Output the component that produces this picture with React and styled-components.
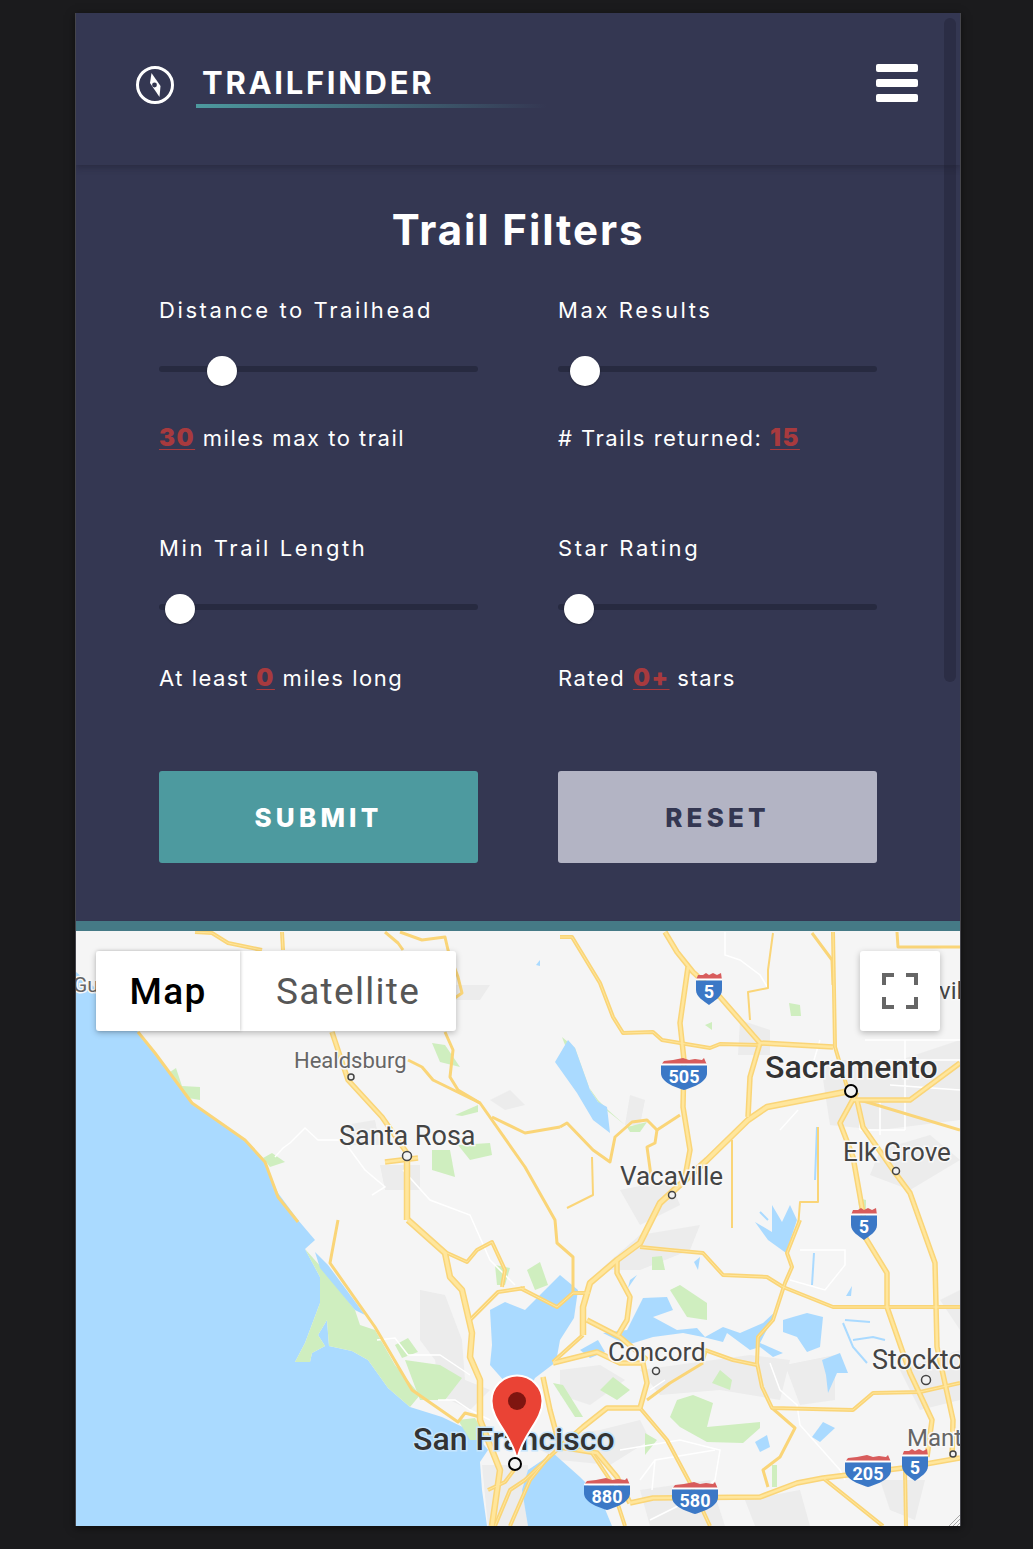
import React from "react"
import styled, { createGlobalStyle } from "styled-components"

const Global = createGlobalStyle`
  html, body { margin: 0; padding: 0; background: #1b1b1d; }
  body { font-family: "Inter", "Liberation Sans", sans-serif; }
  * { box-sizing: border-box; }
`

const Page = styled.div`
  width: 1033px;
  height: 1549px;
  padding: 13px 72px 23px 75px;
`
const Panel = styled.main`
  position: relative;
  height: 1513px;
  display: flex;
  flex-direction: column;
  background: #343752;
  border-left: 1px solid #45454b;
  border-right: 1px solid #45454b;
  box-shadow: 0 2px 8px rgba(0, 0, 0, 0.5);
  overflow: hidden;
`
const Scrollbar = styled.div`
  position: absolute;
  top: 5px;
  right: 4px;
  width: 12px;
  height: 664px;
  border-radius: 6px;
  background: #2b2d45;
`
const Header = styled.header`
  position: relative;
  z-index: 1;
  flex: 0 0 152px;
  display: flex;
  align-items: flex-start;
  padding: 50px 42px 0 59px;
  box-shadow: 0 3px 6px rgba(30, 31, 48, 0.45);
`
const Brand = styled.div`
  display: flex;
  align-items: flex-start;
  flex: 1;
`
const LogoWrap = styled.div`
  width: 40px;
  height: 40px;
  margin-top: 2px;
  margin-right: 21px;
`
const Wordmark = styled.h1`
  margin: 0;
  width: 350px;
  padding: 0 0 1px 6px;
  font-size: 31px;
  line-height: 40px;
  font-weight: 700;
  letter-spacing: 2.7px;
  color: #fff;
  border-bottom: 4px solid transparent;
  border-image: linear-gradient(90deg, #4d9a9f 0%, #343752 100%) 1;
`
const Burger = styled.button`
  display: flex;
  flex-direction: column;
  justify-content: space-between;
  width: 42px;
  height: 38px;
  margin-top: 1px;
  padding: 0;
  background: none;
  border: 0;
  span {
    display: block;
    height: 8px;
    border-radius: 2px;
    background: #fff;
  }
`
const Filters = styled.section`
  flex: 0 0 756px;
  padding: 37px 83px 0 83px;
`
const Title = styled.h2`
  margin: 0 0 38px;
  text-align: center;
  font-size: 42px;
  line-height: 56px;
  font-weight: 700;
  letter-spacing: 1.9px;
  color: #fff;
`
const Grid = styled.div`
  display: grid;
  grid-template-columns: 319px 319px;
  column-gap: 80px;
  row-gap: 70px;
`
const Field = styled.div`
  display: flex;
  flex-direction: column;
  height: 168px;
`
const Label = styled.label`
  font-size: 22px;
  line-height: 28px;
  letter-spacing: 2.6px;
  color: #fff;
`
const Track = styled.div`
  position: relative;
  height: 6px;
  margin-top: 42px;
  border-radius: 3px;
  background: #272a40;
`
const Knob = styled.div`
  position: absolute;
  top: -10px;
  width: 30px;
  height: 30px;
  border-radius: 50%;
  background: #fff;
  box-shadow: 0 1px 2px rgba(0, 0, 0, 0.3);
`
const Value = styled.p`
  margin: ${p => (p.$low ? 54 : 52)}px 0 0;
  font-size: 22px;
  line-height: 28px;
  letter-spacing: 1.5px;
  color: #fff;
`
const Num = styled.span`
  color: #a83a3e;
  font-size: 24px;
  font-weight: 900;
  letter-spacing: 1.5px;
  text-decoration: underline;
  text-decoration-thickness: 1px;
  text-underline-offset: 3px;
`
const Buttons = styled.div`
  display: grid;
  grid-template-columns: 319px 319px;
  column-gap: 80px;
  margin-top: 69px;
`
const ActionButton = styled.button`
  height: 92px;
  border: 0;
  border-radius: 3px;
  font-family: inherit;
  font-size: 26px;
  font-weight: 800;
  letter-spacing: 4.2px;
  color: ${p => (p.$primary ? "#fff" : "#343752")};
  background: ${p => (p.$primary ? "#4d9a9f" : "#b3b4c4")};
`
const MapArea = styled.section`
  position: relative;
  flex: 1;
  border-top: 10px solid #457a86;
  background: #aadaff;
  overflow: hidden;
  svg { display: block; }
`
const MapType = styled.div`
  position: absolute;
  top: 20px;
  left: 20px;
  display: flex;
  height: 80px;
  border-radius: 3px;
  background: #fff;
  box-shadow: 0 2px 6px rgba(0, 0, 0, 0.25);
`
const MapTab = styled.button`
  width: ${p => p.$w}px;
  padding: 0;
  border: 0;
  background: none;
  font-family: "Roboto", sans-serif;
  font-size: 37px;
  font-weight: ${p => (p.$on ? 500 : 400)};
  letter-spacing: 1.3px;
  color: ${p => (p.$on ? "#000" : "#565656")};
  box-shadow: ${p => (p.$on ? "1px 0 3px rgba(0,0,0,0.18)" : "none")};
`
const FullScreen = styled.button`
  position: absolute;
  top: 20px;
  right: 20px;
  width: 80px;
  height: 80px;
  padding: 0;
  border: 0;
  border-radius: 3px;
  background: #fff;
  box-shadow: 0 2px 6px rgba(0, 0, 0, 0.25);
  display: flex;
  align-items: center;
  justify-content: center;
`

const fields = [
  { label: "Distance to Trailhead", x: 48, value: <><Num>30</Num> miles max to trail</> },
  { label: "Max Results", x: 12, value: <># Trails returned: <Num>15</Num></> },
  { label: "Min Trail Length", x: 6, low: true, value: <>At least <Num>0</Num> miles long</> },
  { label: "Star Rating", x: 6, low: true, value: <>Rated <Num>0+</Num> stars</> },
]

// map geometry below is in page pixels, the viewBox takes care of the offset
const coast = "M76 931 L76 1526 L487 1526 L482 1490 L480 1462 L488 1450 L475 1433 L442 1417 L410 1407 L388 1388 L368 1360 L352 1351 L329 1346 L327 1320 L318 1335 L325 1346 L312 1353 L310 1362 L295 1362 L305 1343 L320 1303 L320 1277 L305 1249 L315 1240 L298 1220 L278 1193 L262 1157 L242 1137 L208 1115 L192 1103 L172 1077 L155 1053 L147 1043 L138 1032 L110 1000 L76 972 Z"

const water = [
  "M528 1526 L522 1490 L528 1470 L553 1453 L580 1477 L600 1497 L612 1526 Z",
  "M490 1310 L505 1302 L525 1310 L545 1290 L560 1275 L578 1290 L574 1318 L560 1340 L556 1362 L535 1378 L528 1392 L505 1382 L490 1365 L492 1345 Z",
  "M603 1333 L627 1330 L643 1298 L667 1297 L673 1310 L653 1317 L677 1330 L697 1328 L705 1337 L723 1327 L740 1333 L763 1323 L777 1310 L760 1343 L783 1353 L773 1357 L760 1347 L750 1350 L727 1333 L723 1342 L703 1337 L683 1333 L653 1337 L627 1345 Z",
  "M783 1320 L793 1317 L807 1313 L823 1317 L820 1347 L807 1352 L797 1337 L783 1332 Z",
  "M822 1360 L840 1353 L848 1373 L837 1373 L828 1393 L826 1375 Z",
  "M812 1437 L823 1422 L835 1428 L820 1442 Z",
  "M755 1442 L767 1435 L770 1447 L760 1452 Z",
  "M555 1062 L568 1040 L575 1048 L590 1090 L598 1102 L607 1107 L610 1133 L593 1120 L577 1093 Z",
  "M772 1205 L782 1222 L790 1205 L797 1220 L786 1253 L768 1240 L755 1222 L772 1232 Z",
  "M315 1252 L328 1265 L365 1315 L355 1310 L320 1268 Z",
  "M694 1262 L700 1257 L698 1270 Z",
  "M630 1280 L637 1275 L628 1288 Z",
  "M846 1296 L852 1286 L851 1296 Z",
  "M540 960 L536 965 L540 966 Z",
  "M580 1350 L598 1340 L605 1352 L590 1358 Z",
]

const rivers = [
  "M843 1323 L853 1347 L867 1363 M853 1340 L873 1337 L885 1340",
  "M814 1253 L812 1285 M845 1320 L870 1322",
  "M768 1220 L760 1212 M817 1127 L815 1180",
]

const parks = [
  "M305 1249 L322 1268 L355 1310 L360 1325 L375 1330 L395 1365 L420 1395 L410 1407 L388 1388 L368 1360 L352 1351 L329 1346 L327 1320 L318 1335 L325 1346 L312 1353 L310 1362 L295 1362 L305 1343 L320 1303 L320 1277 Z",
  "M405 1360 L440 1365 L462 1378 L445 1400 L420 1400 Z",
  "M395 1345 L408 1338 L418 1352 L402 1358 Z",
  "M458 1420 L475 1418 L488 1440 L470 1440 Z",
  "M432 1043 L445 1045 L460 1067 L440 1062 Z",
  "M170 1072 L176 1068 L182 1086 L200 1087 L200 1100 L188 1098 Z",
  "M263 1158 L272 1153 L285 1162 L270 1167 Z",
  "M455 1115 L478 1105 L478 1112 L462 1116 Z",
  "M432 1150 L450 1150 L455 1177 L432 1170 Z",
  "M458 1145 L490 1143 L492 1155 L470 1160 Z",
  "M627 1127 L647 1122 L640 1132 L630 1132 Z",
  "M562 1037 L575 1048 L590 1090 L600 1105 L625 1125 L608 1110 L598 1100 L580 1075 L565 1045 Z",
  "M789 1003 L800 1005 L801 1016 L791 1016 Z",
  "M705 1025 L712 1022 L712 1030 Z",
  "M670 1290 L680 1285 L707 1303 L707 1320 L687 1317 Z",
  "M652 1257 L662 1256 L665 1270 L652 1270 Z",
  "M600 1390 L613 1377 L630 1390 L617 1400 Z",
  "M712 1383 L720 1370 L732 1380 L730 1390 Z",
  "M670 1417 L677 1400 L693 1395 L713 1403 L707 1427 L760 1422 L760 1428 L743 1443 L707 1442 L680 1427 Z",
  "M645 1433 L657 1440 L645 1455 Z",
  "M772 1465 L777 1465 L777 1487 L772 1487 Z",
  "M553 1383 L563 1385 L583 1417 L575 1417 Z",
  "M527 1270 L540 1262 L548 1285 L535 1290 Z",
  "M495 1265 L510 1268 L505 1285 L497 1285 Z",
  "M858 1198 L866 1200 L866 1215 L860 1215 Z",
]

const urban = [
  "M420 1290 L445 1295 L462 1340 L465 1380 L490 1390 L470 1410 L440 1395 L435 1360 L420 1340 Z",
  "M380 1165 L420 1165 L420 1190 L385 1190 Z",
  "M820 1060 L900 1060 L960 1040 L960 1120 L880 1130 L830 1125 Z",
  "M880 1150 L930 1135 L960 1160 L910 1190 L870 1175 Z",
  "M520 1440 L600 1430 L640 1420 L650 1440 L610 1465 L560 1460 Z",
  "M560 1370 L600 1365 L625 1380 L590 1405 L560 1395 Z",
  "M640 1370 L750 1355 L790 1360 L780 1400 L720 1390 L660 1395 Z",
  "M785 1365 L835 1355 L835 1400 L800 1405 Z",
  "M482 1465 L528 1465 L530 1526 L488 1526 Z",
  "M900 1370 L960 1350 L960 1400 L920 1410 Z",
  "M620 1190 L670 1180 L680 1205 L640 1225 Z",
  "M600 1270 L640 1235 L700 1225 L690 1250 L640 1270 Z",
  "M740 1020 L770 1030 L770 1055 L738 1055 Z",
  "M345 1125 L375 1120 L380 1145 L350 1145 Z",
  "M455 985 L490 985 L480 1000 L455 1000 Z",
  "M490 1100 L510 1090 L525 1105 L505 1110 Z",
  "M630 1095 L645 1100 L640 1125 L625 1125 Z",
  "M940 1300 L960 1290 L960 1330 Z",
  "M640 1490 L710 1480 L725 1526 L650 1526 Z",
  "M745 1500 L800 1490 L810 1526 L755 1526 Z",
  "M880 1480 L925 1480 L915 1520 L890 1510 Z",
]

const minor = [
  "M725 932 L725 955 L740 960 L760 975 L768 988",
  "M275 1157 L283 1148 L290 1143 L305 1128 L318 1140 L343 1140 L365 1170 L385 1187 L372 1195",
  "M403 1170 L430 1200 L470 1215 L490 1260 L515 1285",
  "M860 1100 L860 1130 M880 1100 L880 1135 M860 1130 L905 1130 M880 1060 L960 1060 M890 1085 L960 1090 M905 1040 L905 1130",
  "M865 1040 L960 1040",
  "M377 1340 L395 1338 L408 1355 L440 1355 L470 1375",
  "M438 1400 L455 1400 L470 1410 L490 1420",
  "M620 1450 L680 1440 L720 1450 L715 1480 L690 1500 L650 1520",
  "M640 1480 L655 1460 L715 1450 M655 1460 L652 1490",
  "M770 1363 L780 1390 L797 1405 L800 1425 L840 1470 L845 1480",
  "M790 1280 L825 1290 L845 1265 L845 1250 L800 1250",
  "M650 1390 L665 1380",
  "M808 1080 L820 1040 M798 1110 L780 1130",
]

// [stroke width, d]
const roads = [
  [5.5, "M665 932 L677 952 L693 972 L720 997 L760 1043 L833 1047"],
  [5.5, "M688 967 L680 1023 L684 1060 L683 1107 L690 1150 L685 1177"],
  [4, "M560 937 L572 937 L600 983 L613 1017 L623 1033 L653 1032 L662 1040 L710 1048 L720 1044 L760 1045"],
  [5.5, "M760 1043 L750 1077 L748 1117"],
  [6.5, "M850 1091 L767 1107 L748 1120 L707 1160 L660 1203 L640 1243 L617 1260 L590 1283 L583 1307 L583 1335"],
  [5.5, "M853 1100 L910 1100 L933 1083 L960 1063"],
  [3, "M860 1100 L960 1130"],
  [4, "M833 932 L835 1047 L847 1087 L853 1095"],
  [3, "M812 933 L832 960 L833 985"],
  [5.5, "M857 1092 L840 1123 L853 1157 L863 1213 L865 1237 L887 1273 L887 1307 L910 1373 L932 1420 L927 1457"],
  [5.5, "M857 1100 L863 1127 L893 1170 L910 1193 L935 1263 L937 1347 L953 1420 L952 1460"],
  [4, "M520 1288 L557 1307 L573 1293 L590 1293"],
  [5.5, "M587 1320 L620 1337 L647 1360"],
  [5.5, "M617 1260 L617 1273 L630 1297 L627 1320 L618 1335"],
  [4, "M640 1247 L670 1250 L703 1253 L723 1275 L767 1277 L783 1287 L833 1307 L960 1307"],
  [4, "M800 1220 L787 1253 L792 1267 L785 1283 L773 1320 L758 1337 L757 1363 L762 1387 L772 1408 L853 1410 L873 1393 L920 1392 L960 1383"],
  [4, "M705 1350 L733 1360 L757 1365"],
  [5.5, "M553 1363 L597 1352 L620 1363 L643 1363 L647 1383 L640 1408 L607 1408 L583 1427 L560 1447"],
  [4, "M640 1408 L667 1440 L690 1483 L710 1526"],
  [5.5, "M630 1503 L653 1498 L760 1497 L797 1483 L823 1478 L903 1468 L960 1458"],
  [4, "M823 1478 L883 1526"],
  [4, "M905 1468 L906 1526"],
  [3, "M772 1408 L795 1428 L780 1457 L763 1470 L768 1487"],
  [5.5, "M543 1377 L550 1410 L560 1447 L597 1453 L617 1477 L630 1503"],
  [4, "M553 1362 L583 1335"],
  [3, "M647 1400 L670 1383 L703 1363"],
  [6.5, "M408 1220 L445 1253 L450 1277 L462 1290 L472 1333 L470 1357 L480 1380 L480 1420 L492 1450 L500 1470 L492 1526"],
  [6.5, "M407 1157 L407 1220"],
  [5.5, "M385 1162 L418 1158"],
  [5.5, "M332 1032 L348 1080 L382 1117 L407 1153"],
  [3, "M138 1032 L155 1053 L192 1103 L245 1140 L265 1162 L278 1197 L298 1222"],
  [3, "M338 1220 L330 1263 L375 1327 L412 1390 L458 1422 L465 1413 L480 1417"],
  [3, "M408 1060 L422 1067 L433 1080 L480 1103 L525 1167 L555 1220 L557 1243 L573 1257 L573 1293"],
  [3, "M445 1032 L453 1050 L450 1077 L458 1090 L480 1103"],
  [3, "M492 1117 L525 1133 L560 1127"],
  [4, "M195 932 L212 933 L228 943 L262 950"],
  [4, "M282 932 L283 950"],
  [3, "M400 932 L422 940 L445 937 L448 950 L458 977 L462 993 L452 1000"],
  [3, "M385 932 L398 943 L403 950"],
  [3, "M560 1127 L567 1123 L593 1150 L610 1162 L615 1137 L632 1122 L647 1120 L657 1130 L680 1115"],
  [3, "M657 1130 L655 1143 L647 1147 L652 1183"],
  [2, "M592 1157 L593 1195 L567 1208"],
  [4, "M445 1252 L467 1262 L477 1250 L492 1242 L505 1270 L502 1287"],
  [4, "M468 1322 L498 1292 L525 1288"],
  [2, "M773 933 L768 970 L768 988 L748 992 L750 1020"],
  [2, "M732 1140 L732 1228"],
  [2, "M818 1127 L818 1202 L800 1202 L798 1228"],
  [3, "M897 932 L898 947 L960 947"],
  [4, "M495 1526 L510 1490 L525 1480 L560 1447"],
  [4, "M510 1526 L530 1480 L550 1455"],
  [4, "M488 1490 L505 1482 L520 1462"],
  [4, "M590 1450 L610 1480 L625 1526"],
  [2, "M707 1350 L703 1363"],
]

const shields = [
  { x: 709, y: 973, w: 26, t: "5" },
  { x: 684, y: 1058, w: 46, t: "505" },
  { x: 864, y: 1208, w: 26, t: "5" },
  { x: 607, y: 1478, w: 46, t: "880" },
  { x: 695, y: 1482, w: 46, t: "580" },
  { x: 868, y: 1455, w: 46, t: "205" },
  { x: 915, y: 1449, w: 26, t: "5" },
]

const labels = [
  { x: 73, y: 992, s: 21, t: "Gu", c: "#666" },
  { x: 939, y: 999, s: 24, t: "vill", c: "#444" },
  { x: 294, y: 1068, s: 22, t: "Healdsburg", c: "#666" },
  { x: 339, y: 1145, s: 27, t: "Santa Rosa", c: "#444" },
  { x: 765, y: 1078, s: 32, t: "Sacramento", c: "#333", w: 500 },
  { x: 620, y: 1185, s: 26, t: "Vacaville", c: "#444" },
  { x: 843, y: 1161, s: 26, t: "Elk Grove", c: "#444" },
  { x: 608, y: 1361, s: 26, t: "Concord", c: "#444" },
  { x: 872, y: 1369, s: 27, t: "Stockton", c: "#444" },
  { x: 907, y: 1446, s: 24, t: "Manteca", c: "#666" },
  { x: 413, y: 1450, s: 32, t: "San Francisco", c: "#333", w: 500, halo: "#c6e5fd" },
]

const towns = [
  { x: 351, y: 1077, r: 3 },
  { x: 407, y: 1156, r: 4.5 },
  { x: 851, y: 1091, r: 6, k: "#000" },
  { x: 672, y: 1195, r: 3.5 },
  { x: 896, y: 1171, r: 3.5 },
  { x: 656, y: 1371, r: 3.5 },
  { x: 926, y: 1380, r: 4.5 },
  { x: 953, y: 1454, r: 3 },
  { x: 515, y: 1464, r: 6, k: "#000" },
]

function Shield({ x, y, w, t }) {
  const l = x - w / 2
  const r = x + w / 2
  const teeth = w > 30
    ? `L${l + 3} ${y + 3} L${l + 12} ${y + 2} L${x - 6} ${y + 1} L${x - 1} ${y} L${x + 5} ${y + 2} L${r - 12} ${y + 1} L${r - 5} ${y + 2} L${r - 3} ${y}`
    : `L${l + 2} ${y + 2} L${x - 6} ${y + 2} L${x - 3} ${y} L${x} ${y + 2} L${x + 4} ${y} L${x + 8} ${y + 2} L${r - 1} ${y}`
  return (
    <g>
      <path d={`M${l} ${y + 7} ${teeth} L${r} ${y + 7} Z`} fill="#d85c5c" />
      <rect x={l} y={y + 5.5} width={w} height={2} fill="#fff" />
      <path
        d={w > 30
          ? `M${l} ${y + 7.5} L${r} ${y + 7.5} L${r} ${y + 15} C${r} ${y + 24} ${x + 10} ${y + 29} ${x} ${y + 32} C${x - 10} ${y + 29} ${l} ${y + 24} ${l} ${y + 15} Z`
          : `M${l} ${y + 7.5} L${r} ${y + 7.5} L${r} ${y + 17} C${r} ${y + 24} ${x + 5} ${y + 28} ${x} ${y + 32} C${x - 5} ${y + 28} ${l} ${y + 24} ${l} ${y + 17} Z`}
        fill="#3b78c6"
      />
      <text x={x} y={y + 25} textAnchor="middle" fontFamily="Roboto, sans-serif" fontWeight="700" fontSize="18" fill="#fff">{t}</text>
    </g>
  )
}

function MapDrawing() {
  return (
    <svg width="884" height="595" viewBox="76 931 884 595">
      <rect x="76" y="931" width="884" height="595" fill="#f5f5f5" />
      <path d={coast} fill="#aadaff" />
      {urban.map((d, i) => <path key={i} d={d} fill="#ececec" />)}
      {parks.map((d, i) => <path key={i} d={d} fill="#cfeebf" />)}
      {water.map((d, i) => <path key={i} d={d} fill="#aadaff" />)}
      {rivers.map((d, i) => <path key={i} d={d} fill="none" stroke="#aadaff" strokeWidth="2" />)}
      {minor.map((d, i) => <path key={i} d={d} fill="none" stroke="#fff" strokeWidth="1.5" />)}
      {roads.map(([w, d], i) => <path key={i} d={d} fill="none" stroke="#fad578" strokeWidth={w} strokeLinejoin="round" />)}
      {roads.filter(r => r[0] > 3).map(([w, d], i) => <path key={i} d={d} fill="none" stroke="#ffe69c" strokeWidth={w - 3} strokeLinejoin="round" />)}
      {towns.map((c, i) => <circle key={i} cx={c.x} cy={c.y} r={c.r} fill="#f2f2f2" stroke={c.k || "#444"} strokeWidth={c.k ? 2 : 1.5} />)}
      {labels.map(l => (
        <text
          key={l.t}
          x={l.x}
          y={l.y}
          fontFamily="Roboto, sans-serif"
          fontWeight={l.w || 400}
          fontSize={l.s}
          fill={l.c}
          stroke={l.halo || "#f8f8f8"}
          strokeWidth="3"
          paintOrder="stroke"
        >
          {l.t}
        </text>
      ))}
      {shields.map((s, i) => <Shield key={i} {...s} />)}
      <path d="M517 1375.5 C503 1375.5 491.5 1387 491.5 1401 C491.5 1420 510 1433 516 1456 L518 1456 C524 1433 542.5 1420 542.5 1401 C542.5 1387 531 1375.5 517 1375.5 Z" fill="#ea4335" stroke="#fff" strokeWidth="2" />
      <circle cx="517" cy="1401" r="9" fill="#7f1510" />
      <path d="M949 1526 L960 1515 M953 1526 L960 1519 M957 1526 L960 1523" stroke="#aaa" strokeWidth="1" />
    </svg>
  )
}

export default function App() {
  return (
    <Page>
      <Global />
      <Panel>
        <Header>
          <Brand>
            <LogoWrap>
              <svg width="40" height="40" viewBox="0 0 40 40">
                <circle cx="20" cy="20" r="17.5" fill="none" stroke="#fff" strokeWidth="3" />
                <path d="M16.5 8 L25.5 21 L24.5 32 L15 18 Z" fill="#fff" />
                <circle cx="19.5" cy="20" r="2.4" fill="#343752" />
              </svg>
            </LogoWrap>
            <Wordmark>TRAILFINDER</Wordmark>
          </Brand>
          <Burger aria-label="Menu"><span /><span /><span /></Burger>
        </Header>
        <Filters>
          <Title>Trail Filters</Title>
          <Grid>
            {fields.map(f => (
              <Field key={f.label}>
                <Label>{f.label}</Label>
                <Track>
                  <Knob style={{ left: f.x }} />
                </Track>
                <Value $low={f.low}>{f.value}</Value>
              </Field>
            ))}
          </Grid>
          <Buttons>
            <ActionButton $primary>SUBMIT</ActionButton>
            <ActionButton>RESET</ActionButton>
          </Buttons>
        </Filters>
        <MapArea>
          <MapDrawing />
          <MapType>
            <MapTab $on $w={144}>Map</MapTab>
            <MapTab $w={216}>Satellite</MapTab>
          </MapType>
          <FullScreen aria-label="Full screen">
            <svg width="36" height="36" viewBox="0 0 36 36">
              <path d="M2 12 L2 2 L12 2 M24 2 L34 2 L34 12 M34 24 L34 34 L24 34 M12 34 L2 34 L2 24" fill="none" stroke="#666" strokeWidth="4" />
            </svg>
          </FullScreen>
        </MapArea>
        <Scrollbar />
      </Panel>
    </Page>
  )
}
